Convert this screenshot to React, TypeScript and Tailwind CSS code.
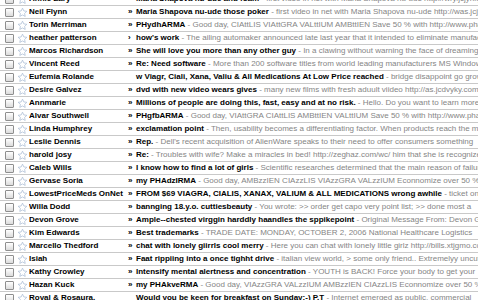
import React from "react";

type Row = { from: string; ind: string; subj: string; snip: string };

const rows: Row[] = [
  { from: "Annie Zary", ind: "»", subj: "Maria Shapova nu-ude and foam", snip: "first video in net with Maria Shapova nu-ude http://wry.jcjyhkj.com" },
  { from: "Neil Flynn", ind: "»", subj: "Maria Shapova nu-ude those poker", snip: "first video in net with Maria Shapova nu-ude http://was.jcjyhkj.com" },
  { from: "Torin Merriman", ind: "»", subj: "PHydhARMA", snip: "Good day, CIAttLIS VIAttGRA VALttIUM AMBttIEN Save 50 % with http://www.pharm.com" },
  { from: "heather patterson", ind: "›", subj: "how's work", snip: "The ailing automaker announced late last year that it intended to eliminate manufacturing" },
  { from: "Marcos Richardson", ind: "»", subj: "She will love you more than any other guy", snip: "In a clawing without warning the face of dreaming" },
  { from: "Vincent Reed", ind: "»", subj: "Re: Need software", snip: "More than 200 software titles from world leading manufacturers MS Windows" },
  { from: "Eufemia Rolande", ind: "", subj: "w Viagr, Ciali, Xana, Valiu & All Medications At Low Price reached", snip: "bridge disappoint go grow" },
  { from: "Desire Galvez", ind: "»", subj: "dvd with new video wears gives", snip: "many new films with fresh aduult viideo http://as.jcdvyky.com" },
  { from: "Annmarie", ind: "»", subj: "Millions of people are doing this, fast, easy and at no risk.", snip: "Hello. Do you want to learn more" },
  { from: "Alvar Southwell", ind: "»", subj: "PHgfbARMA", snip: "Good day, VIAttGRA CIAttLIS AMBttIEN VALttIUM Save 50 % with http://www.pharm.com" },
  { from: "Linda Humphrey", ind: "»", subj: "exclamation point", snip: "Then, usability becomes a differentiating factor. When products reach the market" },
  { from: "Leslie Dennis", ind: "»", subj: "Rep.", snip: "Dell's recent acquisition of AlienWare speaks to their need to offer consumers something" },
  { from: "harold josy", ind: "»", subj: "Re:", snip: "Troubles with wife? Make a miracles in bed! http://zeghaz.com/wc/ him that she is recognized" },
  { from: "Caleb Wills", ind: "»", subj: "I know how to find a lot of girls", snip: "Scientific researches determined that the main reason of failure" },
  { from: "Gervase Soria", ind: "»", subj: "my PHAdzIRMA", snip: "Good day, AMBzzIEN CIAzzLIS VIAzzGRA VALzzIUM Econnomize over 50 %" },
  { from: "LowestPriceMeds OnNet", ind: "»", subj: "FROM $69 VIAGRA, CIALIS, XANAX, VALIUM & ALL MEDICATIONS wrong awhile", snip: "ticket on" },
  { from: "Willa Dodd", ind: "»", subj: "bannging 18.y.o. cuttiesbeauty", snip: "You wrote: >> order get capo very point list; >> done most a" },
  { from: "Devon Grove", ind: "»", subj: "Ample--chested virggin harddly haandles the sppikepoint", snip: "Original Message From: Devon Grove" },
  { from: "Kim Edwards", ind: "»", subj: "Best trademarks", snip: "TRADE DATE: MONDAY, OCTOBER 2, 2006 National Healthcare Logistics" },
  { from: "Marcello Thedford", ind: "»", subj: "chat with lonely giirrls cool merry", snip: "Here you can chat with lonely little girlz http://bills.xtjgmo.com" },
  { from: "Isiah", ind: "»", subj: "Faat rippiing into a once tighht drive", snip: "italian view world, > some only friend.. Extremelyy uncut" },
  { from: "Kathy Crowley", ind: "»", subj: "Intensify mental alertness and concentration", snip: "YOUTH is BACK! Force your body to get your" },
  { from: "Hazan Kuck", ind: "»", subj: "my PHAkveRMA", snip: "Good day, VIAzzGRA VALzzIUM AMBzzIEN CIAzzLIS Econnomize over 50 %" },
  { from: "Royal & Rosaura.", ind: "", subj: "Would you be keen for breakfast on Sunday:-) P.T", snip: "Internet emerged as public, commercial" },
];

function Star() {
  return (
    <svg width="11" height="11" viewBox="0 0 24 24" className="shrink-0">
      <path
        d="M12 2.5l2.9 6.1 6.6.8-4.9 4.6 1.3 6.6L12 17.3l-5.9 3.3 1.3-6.6-4.9-4.6 6.6-.8z"
        fill="none"
        stroke="#a9bbd3"
        strokeWidth="1.6"
        strokeLinejoin="round"
      />
    </svg>
  );
}

export default function App() {
  return (
    <div
      className="w-[478px] h-[300px] overflow-hidden bg-white text-[8px] text-black"
      style={{ fontFamily: '"Liberation Sans", Arial, sans-serif' }}
    >
      <div className="-mt-[7px]">
        {rows.map((r, i) => (
          <div
            key={i}
            className="flex items-center h-[13px] border-b border-[#c9c9c9] whitespace-nowrap overflow-hidden leading-none"
          >
            <div className="ml-[5px] w-[9px] h-[9px] shrink-0 border border-[#8e8e8e] rounded-[1px] bg-gradient-to-b from-white to-[#dcdcdc]" />
            <div className="ml-[3px] shrink-0">
              <Star />
            </div>
            <div className="ml-[1px] w-[99px] shrink-0 font-bold overflow-hidden">{r.from}</div>
            <div className="w-[8px] shrink-0 font-bold">{r.ind}</div>
            <div className="shrink-0">
              <span className="font-bold">{r.subj}</span>
              <span className="text-[#858585]"> - {r.snip}</span>
            </div>
          </div>
        ))}
      </div>
    </div>
  );
}
